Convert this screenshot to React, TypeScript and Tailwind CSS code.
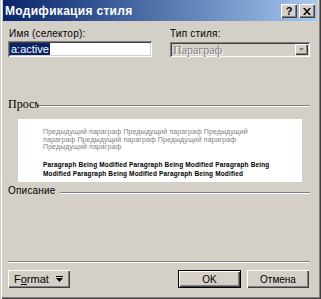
import React from 'react'

// classic 3D edges
const raised =
  'shadow-[inset_1px_1px_0_#ffffff,inset_-1px_-1px_0_#404040,inset_-2px_-2px_0_#808080]'
const sunken =
  'shadow-[inset_1px_1px_0_#808080,inset_-1px_-1px_0_#ffffff,inset_2px_2px_0_#404040,inset_-2px_-2px_0_#d4d0c8]'

const sans = "font-['Liberation_Sans',Arial,sans-serif]"
const serif = "font-['Liberation_Serif','Times_New_Roman',serif]"

function Etched({ className = '' }: { className?: string }) {
  return <div className={`h-[2px] border-t border-[#808080] border-b border-b-white ${className}`} />
}

function TitleButton({ children }: { children: React.ReactNode }) {
  return (
    <div
      className={`w-[16px] h-[14px] bg-[#d4d0c8] ${raised} flex items-center justify-center text-black text-[11px] font-bold leading-none`}
    >
      {children}
    </div>
  )
}

function FormatArrow() {
  return (
    <svg width="7" height="7" viewBox="0 0 7 7" className="ml-[7px]">
      <rect x="0" y="0" width="7" height="1" fill="#000" />
      <path d="M0 2h7l-3.5 4z" fill="#000" />
    </svg>
  )
}

const prev = 'Предыдущий параграф '.repeat(6).trim()
const mod = 'Paragraph Being Modified '.repeat(5).trim()

export default function App() {
  return (
    <div
      className={`w-[321px] h-[299px] bg-[#d4d0c8] pl-[3px] pr-[4px] flex flex-col shadow-[inset_1px_0_0_#d4d0c8,inset_2px_0_0_#ffffff,inset_-1px_-1px_0_#404040,inset_-2px_-2px_0_#808080] ${sans} text-[10px] text-black select-none`}
    >
      {/* Title bar */}
      <div className="h-[21px] shrink-0 flex items-center pl-[2px] pr-[2px] bg-gradient-to-r from-[#0a246a] to-[#a6caf0]">
        <span className="text-white font-bold text-[12px] leading-none tracking-[0.3px]">
          Модификация стиля
        </span>
        <div className="ml-auto flex items-center mt-[1px]">
          <TitleButton>?</TitleButton>
          <div className="w-[2px]" />
          <TitleButton>
            <svg width="8" height="7" viewBox="0 0 8 7">
              <path d="M0 0h2l2 2.5 2-2.5h2l-3 3.5 3 3.5h-2l-2-2.5-2 2.5h-2l3-3.5z" fill="#000" />
            </svg>
          </TitleButton>
        </div>
      </div>

      {/* Body */}
      <div className="flex flex-col px-[5px]">
        <div className="flex mt-[7px]">
          <div className="w-[144px] flex flex-col">
            <span className="pl-[1px] leading-[12px] tracking-[0.2px]">Имя (селектор):</span>
            <div className={`mt-[1px] h-[16px] bg-white ${sunken} flex items-center px-[2px]`}>
              <span className="bg-[#0a246a] text-white text-[11px] leading-[12px] px-[1px]">a:active</span>
            </div>
          </div>
          <div className="ml-[18px] w-[140px] flex flex-col">
            <span className="leading-[12px] tracking-[0.2px]">Тип стиля:</span>
            <div className={`mt-[2px] h-[15px] ${sunken} flex items-center pl-[3px] pr-[2px]`}>
              <span className={`${serif} text-[12px] text-[#808080] leading-none [text-shadow:1px_1px_0_#ffffff]`}>
                Параграф
              </span>
              <div className={`ml-auto w-[13px] h-[11px] bg-[#d4d0c8] ${raised} flex items-center justify-center`}>
                <svg width="5" height="3" viewBox="0 0 5 3">
                  <path d="M0 0h5l-2.5 3z" fill="#808080" />
                </svg>
              </div>
            </div>
          </div>
        </div>

        {/* Preview */}
        <div className="flex items-center mt-[40px]">
          <div className={`w-[31px] overflow-hidden whitespace-nowrap ${serif} text-[12px] leading-[14px]`}>
            Просмотр
          </div>
          <Etched className="flex-1 mt-[3px] mr-[2px]" />
        </div>
        <div className="mt-[8px] mx-[10px] h-[63px] bg-white pl-[25px] pr-[30px] pt-[9px]">
          <p className="text-[7px] leading-[7.5px] text-[#808080] tracking-[0.1px]">{prev}</p>
          <p className="mt-[9px] text-[6.5px] leading-[9px] font-bold tracking-[0.15px]">{mod}</p>
        </div>

        <div className="flex items-center mt-[2px]">
          <span className="leading-[14px] tracking-[0.2px]">Описание</span>
          <Etched className="flex-1 ml-[4px] mt-[3px] mr-[2px]" />
        </div>

        <Etched className="mt-[63px] mr-[2px]" />

        {/* Buttons */}
        <div className="flex items-center mt-[7px]">
          <div className={`w-[62px] h-[18px] ${raised} flex items-center pl-[6px] text-[11px]`}>
            <span>
              F<span className="underline">o</span>rmat
            </span>
            <FormatArrow />
          </div>
          <div className="ml-auto w-[63px] h-[18px] border border-black flex">
            <div className={`flex-1 ${raised} flex items-center justify-center`}>OK</div>
          </div>
          <div className={`ml-[6px] mr-[3px] w-[62px] h-[18px] ${raised} flex items-center justify-center`}>
            Отмена
          </div>
        </div>
      </div>
    </div>
  )
}
